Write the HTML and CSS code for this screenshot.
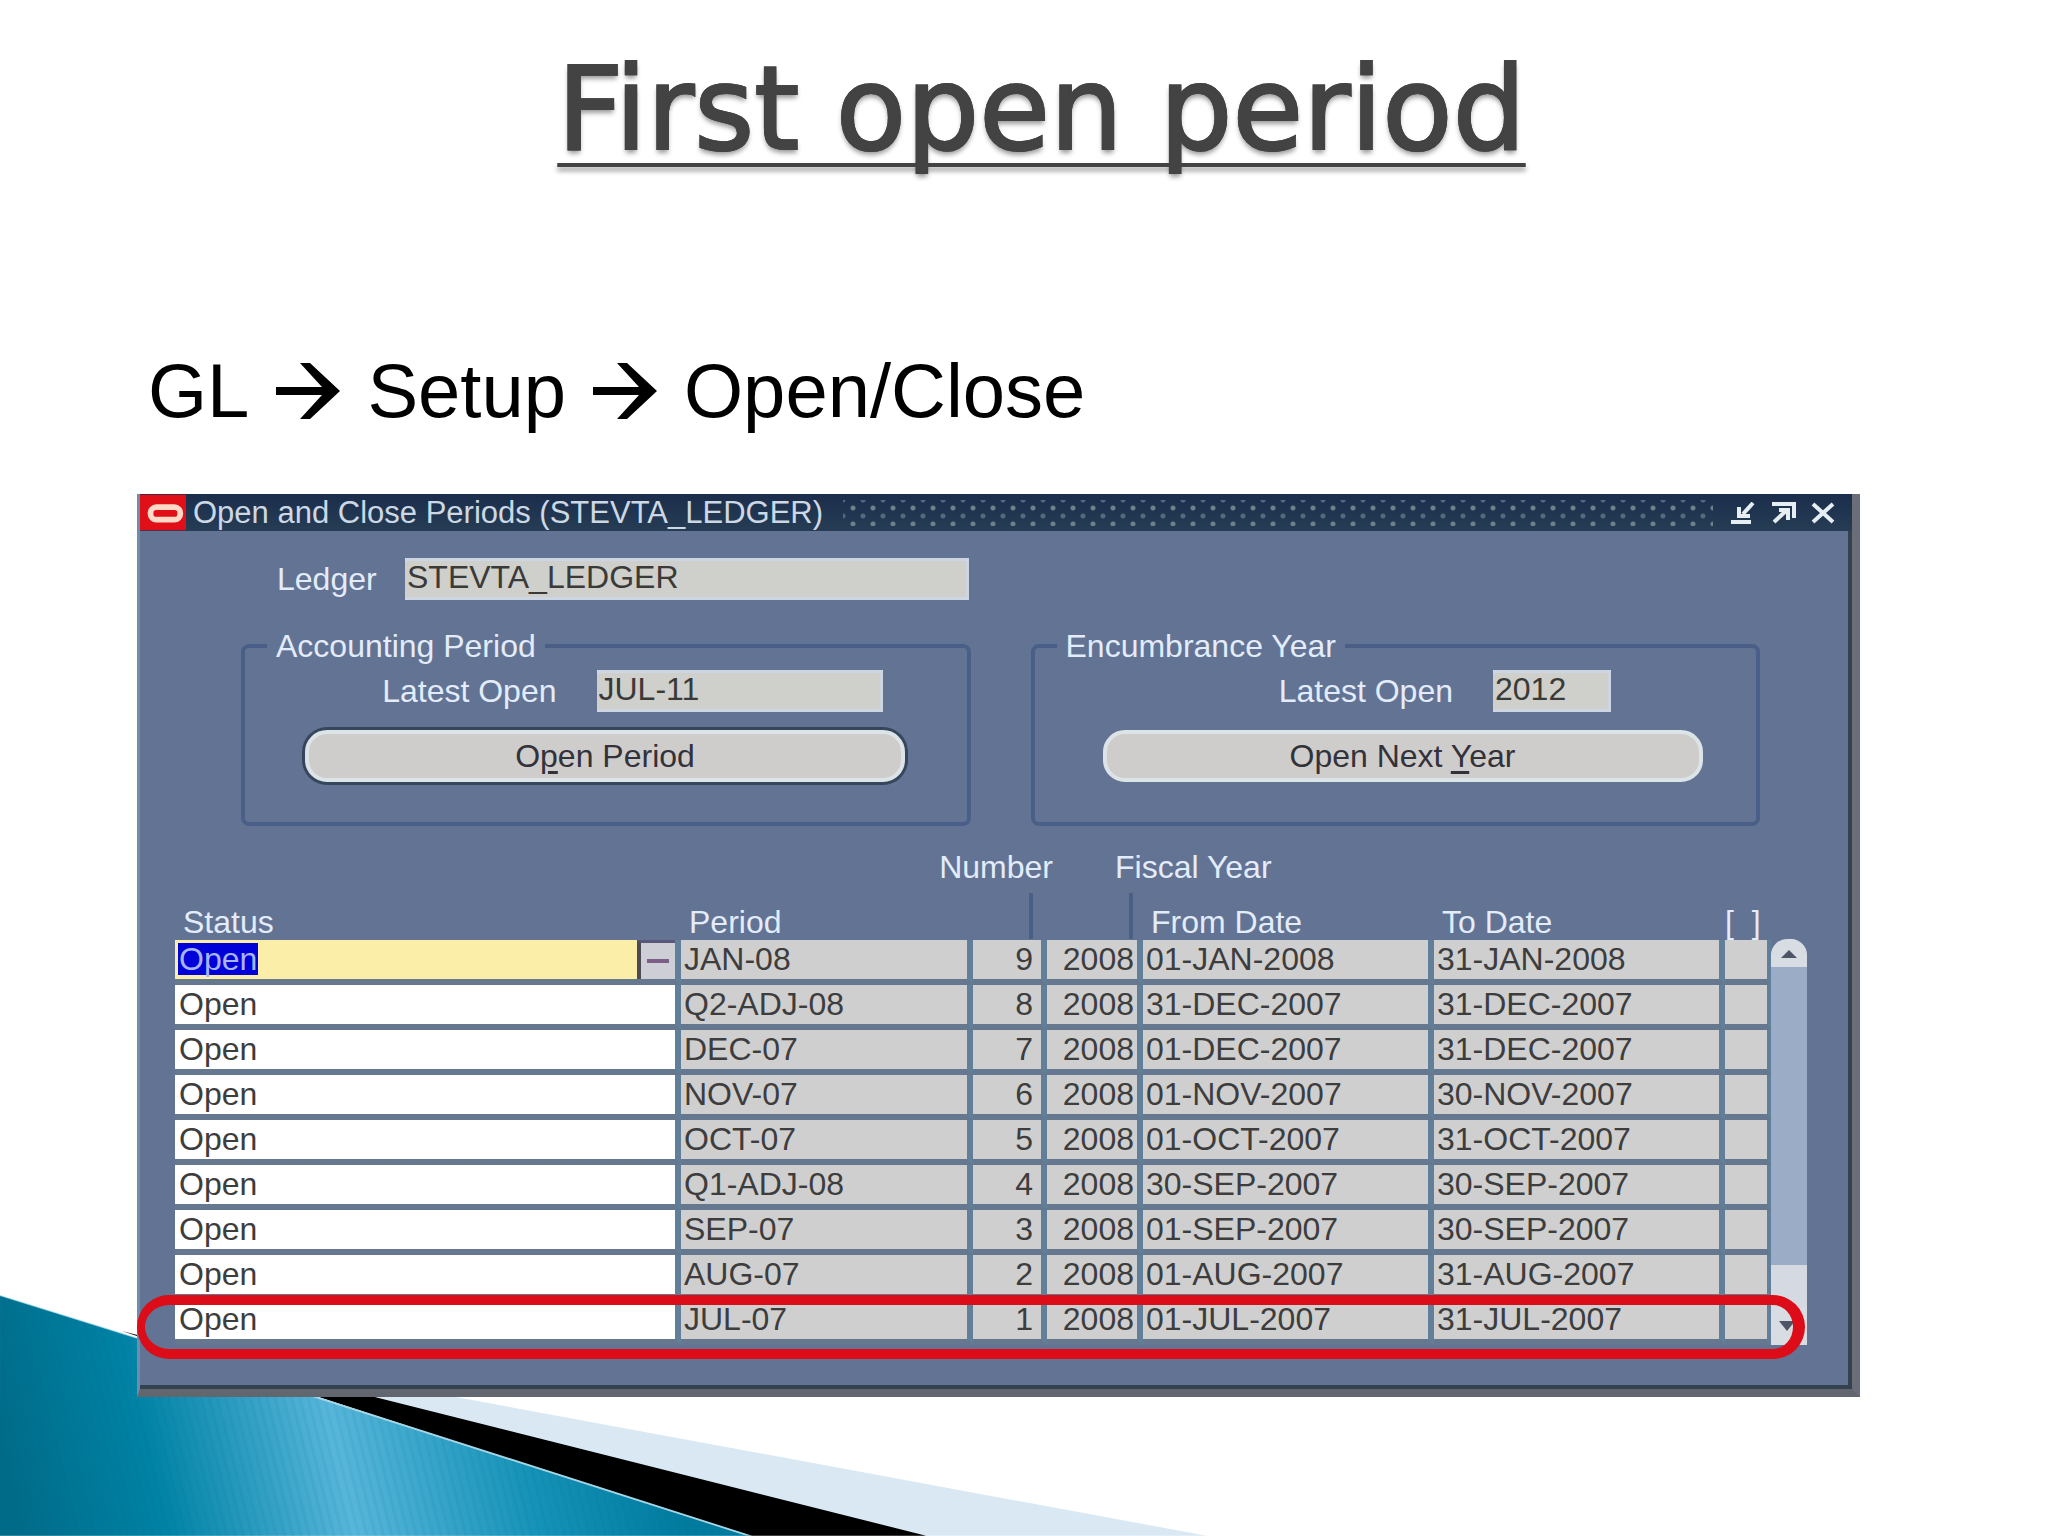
FILE: index.html
```html
<!DOCTYPE html>
<html lang="en">
<head>
<meta charset="utf-8">
<title>First open period</title>
<link rel="stylesheet" href="styles.css">
</head>
<body>
<main class="slide">
  <svg class="swoosh" viewBox="0 0 1230 244" aria-hidden="true">
    <defs>
      <linearGradient id="teal" gradientUnits="userSpaceOnUse" x1="0" y1="150" x2="640" y2="10">
        <stop offset="0" stop-color="#006b88"/>
        <stop offset="0.22" stop-color="#0083a5"/>
        <stop offset="0.5" stop-color="#58b6da"/>
        <stop offset="0.78" stop-color="#1592b7"/>
        <stop offset="1" stop-color="#007b9e"/>
      </linearGradient>
      <pattern id="ribs" width="8" height="8" patternUnits="userSpaceOnUse" patternTransform="rotate(-14)">
        <rect width="3" height="8" fill="#006a90" fill-opacity="0.08"/>
      </pattern>
    </defs>
    <path d="M136 46L1208 244H900L136 50Z" fill="#dae8f3"/>
    <path d="M122 39L379 106L927 244H745L322 106Z" fill="#000"/>
    <path d="M0 3L135 45L322 106L753 244H0Z" fill="#a4d6e6"/>
    <path d="M0 4L135 46L322 108L747 244H0Z" fill="url(#teal)"/>
    <path d="M0 4L135 46L322 108L747 244H0Z" fill="url(#ribs)"/>
  </svg>

  <h1 class="title">First open period</h1>

  <p class="path">
    <span>GL</span>
    <svg class="arrow" viewBox="0 0 64 56" role="img" aria-label="to"><path d="M0 24H46L24 0H34L64 28L34 56H24L46 32H0Z"/></svg>
    <span>Setup</span>
    <svg class="arrow" viewBox="0 0 64 56" role="img" aria-label="to"><path d="M0 24H46L24 0H34L64 28L34 56H24L46 32H0Z"/></svg>
    <span>Open/Close</span>
  </p>

  <section class="window">
    <header class="titlebar">
      <svg class="logo" viewBox="0 0 48 37" aria-hidden="true"><rect width="48" height="37" fill="#e00f18"/><rect x="11" y="13" width="31" height="13" rx="6" fill="none" stroke="#ffd9c8" stroke-width="6"/></svg>
      <h2 class="caption">Open and Close Periods (STEVTA_LEDGER)</h2>
      <div class="grip"></div>
      <button class="ctl" type="button" aria-label="Minimize"><svg viewBox="0 0 28 22"><path d="M2 20H22M24 1L14 12M10 5V14H21" /></svg></button>
      <button class="ctl" type="button" aria-label="Maximize"><svg viewBox="0 0 28 22"><path d="M3 2H25V16M5 20L18 8M10 8H19V18"/></svg></button>
      <button class="ctl" type="button" aria-label="Close"><svg viewBox="0 0 28 22"><path d="M4 2L24 20M24 2L4 20"/></svg></button>
    </header>

    <div class="content">
      <div class="ledger">
        <label for="ledger">Ledger</label>
        <input class="field" id="ledger" value="STEVTA_LEDGER" readonly>
      </div>

      <div class="groups">
        <fieldset class="group accounting">
          <legend>Accounting Period</legend>
          <div class="latest">
            <label for="latest-period">Latest Open</label>
            <input class="field" id="latest-period" value="JUL-11" readonly>
          </div>
          <button class="action default" type="button">O<u>p</u>en Period</button>
        </fieldset>
        <fieldset class="group encumbrance">
          <legend>Encumbrance Year</legend>
          <div class="latest">
            <label for="latest-year">Latest Open</label>
            <input class="field" id="latest-year" value="2012" readonly>
          </div>
          <button class="action" type="button">Open Next <u>Y</u>ear</button>
        </fieldset>
      </div>

      <div class="periods">
        <table class="grid">
          <colgroup><col class="c-status"><col class="c-period"><col class="c-number"><col class="c-year"><col class="c-date"><col class="c-date"><col class="c-flag"></colgroup>
          <thead>
            <tr>
              <th>Status</th>
              <th>Period</th>
              <th><div class="raised end">Number</div></th>
              <th><div class="raised start">Fiscal Year</div></th>
              <th>From Date</th>
              <th>To Date</th>
              <th class="flag">[&nbsp; ]</th>
            </tr>
          </thead>
          <tbody>
            <tr><td class="status current"><div class="lov"><input aria-label="Status" value="Open"><button type="button" aria-label="List of values"></button></div></td><td>JAN-08</td><td class="num">9</td><td class="num year">2008</td><td>01-JAN-2008</td><td>31-JAN-2008</td><td></td></tr>
            <tr><td class="status"><input aria-label="Status" value="Open"></td><td>Q2-ADJ-08</td><td class="num">8</td><td class="num year">2008</td><td>31-DEC-2007</td><td>31-DEC-2007</td><td></td></tr>
            <tr><td class="status"><input aria-label="Status" value="Open"></td><td>DEC-07</td><td class="num">7</td><td class="num year">2008</td><td>01-DEC-2007</td><td>31-DEC-2007</td><td></td></tr>
            <tr><td class="status"><input aria-label="Status" value="Open"></td><td>NOV-07</td><td class="num">6</td><td class="num year">2008</td><td>01-NOV-2007</td><td>30-NOV-2007</td><td></td></tr>
            <tr><td class="status"><input aria-label="Status" value="Open"></td><td>OCT-07</td><td class="num">5</td><td class="num year">2008</td><td>01-OCT-2007</td><td>31-OCT-2007</td><td></td></tr>
            <tr><td class="status"><input aria-label="Status" value="Open"></td><td>Q1-ADJ-08</td><td class="num">4</td><td class="num year">2008</td><td>30-SEP-2007</td><td>30-SEP-2007</td><td></td></tr>
            <tr><td class="status"><input aria-label="Status" value="Open"></td><td>SEP-07</td><td class="num">3</td><td class="num year">2008</td><td>01-SEP-2007</td><td>30-SEP-2007</td><td></td></tr>
            <tr><td class="status"><input aria-label="Status" value="Open"></td><td>AUG-07</td><td class="num">2</td><td class="num year">2008</td><td>01-AUG-2007</td><td>31-AUG-2007</td><td></td></tr>
            <tr><td class="status"><input aria-label="Status" value="Open"></td><td>JUL-07</td><td class="num">1</td><td class="num year">2008</td><td>01-JUL-2007</td><td>31-JUL-2007</td><td></td></tr>
          </tbody>
        </table>
        <div class="scrollbar">
          <button class="up" type="button" aria-label="Scroll up"><svg viewBox="0 0 36 28"><path d="M10 19L18 11L26 19Z"/></svg></button>
          <div class="thumb"></div>
          <button class="down" type="button" aria-label="Scroll down"><svg viewBox="0 0 36 38"><path d="M8 14H24L16 24Z"/></svg></button>
        </div>
        <div class="ring"></div>
      </div>
    </div>
  </section>
</main>
</body>
</html>
```
FILE: styles.css
```css
* { box-sizing: border-box; }

body {
  margin: 0;
  background: #fff;
  font-family: "Liberation Sans", Arial, sans-serif;
}

.slide {
  position: relative;
  min-height: 100vh;
  padding: 30px 188px 138px 137px;
  overflow: hidden;
}

/* Decorative wedges behind the slide's lower left corner */
.swoosh {
  position: absolute;
  left: 0;
  bottom: 0;
  width: 60%;
}

.title {
  margin: 0 0 159px;
  padding-left: 86px;
  color: #434343;
  font: 400 115px/158px "DejaVu Sans", Verdana, sans-serif;
  text-align: center;
  text-decoration: underline;
  text-decoration-thickness: 4px;
  text-decoration-skip-ink: none;
  text-underline-offset: 14px;
  text-shadow: 0 4px 5px rgba(0, 0, 0, 0.4);
  -webkit-text-stroke: 2px #434343;
}

.path {
  display: flex;
  align-items: center;
  gap: 27px;
  margin: 0 0 59px;
  padding-left: 11px;
  color: #000;
  font-size: 76px;
  line-height: 88px;
}

.arrow { width: 64px; height: 56px; }

/* Forms window */
.window {
  position: relative;
  background: #627394;
  border-left: 3px solid #6d8dac;
  border-right: 8px solid #6b6e78;
  border-bottom: 8px solid #62666f;
  box-shadow: inset -4px -4px 0 #34424f;
  color: #e2ecfa;
  font-size: 32px;
}

.titlebar {
  display: flex;
  align-items: center;
  height: 37px;
  padding-right: 15px;
  background: linear-gradient(#1b2d4c, #263d54);
}

.logo { width: 46px; height: 37px; }

.caption {
  margin: 0 20px 0 7px;
  color: #ccd8e4;
  font-size: 31px;
  font-weight: 400;
  line-height: 37px;
}

.grip {
  flex: 1;
  height: 26px;
  margin-right: 4px;
  background-image:
    radial-gradient(circle, #6e808a 2px, transparent 3px),
    radial-gradient(circle, #55697a 2px, transparent 3px);
  background-size: 20px 16px;
  background-position: 0 0, 10px 8px;
}

.ctl {
  width: 28px;
  height: 22px;
  margin-left: 12px;
  padding: 0;
  border: 0;
  background: none;
}

.ctl svg {
  display: block;
  fill: none;
  stroke: #e6eef4;
  stroke-width: 4;
}

.content { padding: 27px 37px 44px 35px; }

.ledger {
  display: flex;
  align-items: center;
  padding-left: 102px;
}

.ledger label { width: 128px; }

.field {
  height: 42px;
  padding: 0 2px 4px;
  border: 3px solid #cdd6e2;
  border-left: 0;
  background: #cfcfcb;
  color: #3a3a38;
  font: 32px/34px "Liberation Sans", Arial, sans-serif;
}

#ledger { width: 564px; }

.groups {
  display: grid;
  grid-template-columns: 1fr 1fr;
  gap: 60px;
  padding: 28px 55px 0 66px;
}

.group {
  min-width: 0;
  height: 198px;
  margin: 0;
  padding: 6px 0 0;
  border: 4px solid #4a5f88;
  border-radius: 8px;
}

.group legend {
  margin-left: 22px;
  padding: 0 9px;
  line-height: 36px;
}

.latest {
  display: flex;
  align-items: center;
  justify-content: flex-end;
  gap: 40px;
}

.accounting .latest { padding-right: 84px; }
.encumbrance .latest { padding-right: 145px; }
#latest-period { width: 286px; }
#latest-year { width: 118px; }

.action {
  display: block;
  width: 600px;
  height: 52px;
  margin-top: 18px;
  border: 4px solid #dce4e8;
  border-radius: 22px;
  background: #cfcdcb;
  color: #33323a;
  font: 32px/36px "Liberation Sans", Arial, sans-serif;
}

.action u { text-underline-offset: 4px; }
.action.default { box-shadow: 0 0 0 3px #36465c; }
.accounting .action { margin-left: 60px; }
.encumbrance .action { margin-left: 68px; }

/* Periods table */
.periods {
  position: relative;
  display: grid;
  grid-template-columns: minmax(0, 1fr) 36px;
  align-items: end;
  margin: 19px 8px 0 0;
}

.grid {
  width: 100%;
  table-layout: fixed;
  border-collapse: separate;
  border-spacing: 0;
}

.c-status { width: 506px; }
.c-period { width: 292px; }
.c-number { width: 74px; }
.c-year { width: 96px; }
.c-date { width: 291px; }

.grid th {
  height: 95px;
  padding: 0 0 0 8px;
  font-weight: 400;
  line-height: 36px;
  text-align: left;
  vertical-align: bottom;
  white-space: nowrap;
}

.grid .flag { padding-left: 0; }

.raised {
  display: flex;
  flex-direction: column;
  height: 91px;
}

.raised::after {
  content: "";
  height: 46px;
  margin: 8px 14px 0;
  border-left: 4px solid #4a5f88;
}

.raised.end { align-items: flex-end; margin-right: -6px; }
.raised.end::after { margin-right: 20px; }
.raised.start { align-items: flex-start; padding-left: 60px; }

.grid td {
  height: 45px;
  padding: 0 0 2px 3px;
  border-right: 6px solid #627f99;
  border-bottom: 6px solid #66788f;
  background: #cfcfd0;
  background-clip: padding-box;
  color: #3d3d3d;
  font-size: 32px;
  line-height: 34px;
  white-space: nowrap;
}

.grid td:last-child { border-right-width: 4px; }

.grid .num { padding-right: 8px; text-align: right; }
.grid .year { padding-right: 3px; }
.grid .status { padding: 0; background-color: #fff; }

.status input {
  display: block;
  width: 100%;
  height: 39px;
  padding: 0 4px 1px;
  border: 0;
  background: none;
  color: #3d3d3d;
  font: 32px/34px "Liberation Sans", Arial, sans-serif;
}

.lov { display: flex; background: #fbeea9; }

.current .lov input {
  flex: 1;
  background: linear-gradient(#0000d8, #0000d8) 3px 3px / 80px 32px no-repeat;
  color: #a9b4ff;
}

.lov button {
  display: grid;
  place-items: center;
  width: 38px;
  height: 39px;
  padding: 0;
  border: 0;
  border-top: 3px solid #59587a;
  border-left: 4px solid #4d4a55;
  background: #cdced6;
}

.lov button::before {
  content: "";
  width: 22px;
  height: 4px;
  background: #7b5f86;
}

.scrollbar {
  display: flex;
  flex-direction: column;
  height: 406px;
  border-radius: 18px 18px 0 0;
  background: #9badc6;
}

.scrollbar button {
  display: block;
  width: 100%;
  padding: 0;
  border: 0;
  background: #d8dde4;
}

.scrollbar svg { display: block; fill: #4d5566; }
.scrollbar .up { border-radius: 16px 16px 0 0; }
.thumb { height: 42px; margin-top: auto; background: #d5d9e2; }

/* Marker around the first opened period */
.ring {
  position: absolute;
  left: -38px;
  right: 2px;
  bottom: -14px;
  height: 64px;
  border: 10px solid #dc0c18;
  border-left-width: 8px;
  border-right-width: 12px;
  border-radius: 34px;
}
```
